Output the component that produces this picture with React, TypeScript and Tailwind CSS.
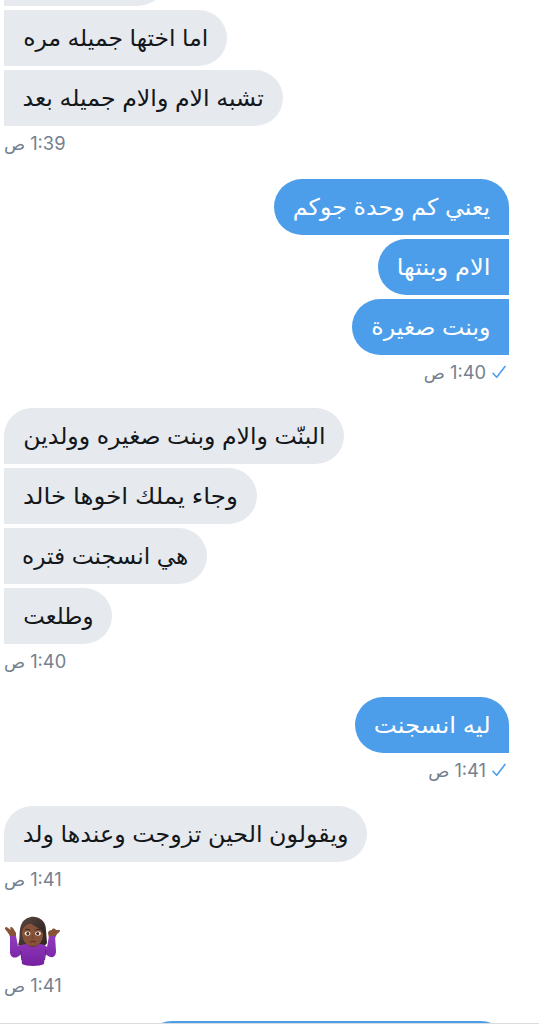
import { useLayoutEffect, useRef, useState } from "react";

type Message = { text: string; width: number };

const opening: Message[] = [
  { text: "اما اختها جميله مره", width: 223 },
  { text: "تشبه الام والام جميله بعد", width: 278.5 },
];
const question: Message[] = [
  { text: "يعني كم وحدة جوكم", width: 235 },
  { text: "الام وبنتها", width: 131 },
  { text: "وبنت صغيرة", width: 157 },
];
const answer: Message[] = [
  { text: "البنّت والام وبنت صغيره وولدين", width: 340 },
  { text: "وجاء يملك اخوها خالد", width: 252.5 },
  { text: "هي انسجنت فتره", width: 203.4 },
  { text: "وطلعت", width: 108 },
];
const why: Message[] = [{ text: "ليه انسجنت", width: 154 }];
const reply: Message[] = [{ text: "ويقولون الحين تزوجت وعندها ولد", width: 363 }];

function FittedText({ text, width }: Message) {
  const ref = useRef<HTMLSpanElement>(null);
  const [scale, setScale] = useState(1);
  useLayoutEffect(() => {
    if (ref.current) setScale(width / ref.current.offsetWidth);
  }, [text, width]);
  return (
    <span ref={ref} className="block w-max shrink-0 origin-center whitespace-nowrap" style={{ transform: `scaleX(${scale})` }}>
      {text}
    </span>
  );
}

function Bubble({ message, sent, first }: { message: Message; sent?: boolean; first?: boolean }) {
  const tone = sent
    ? "self-end rounded-l-[28px] bg-[#4c9eeb] text-white"
    : "self-start rounded-r-[28px] bg-[#e6eaef] text-[#14171a]";
  const corner = first ? (sent ? "rounded-tr-[28px]" : "rounded-tl-[28px]") : "";
  return (
    <div
      dir="rtl"
      className={`flex h-[56.4px] shrink-0 items-center justify-center text-[23px] leading-[32px] ${tone} ${corner}`}
      style={{ width: message.width }}
    >
      <FittedText text={message.text} width={message.width - 37.5} />
    </div>
  );
}

function Stamp({ time, sent }: { time: string; sent?: boolean }) {
  return (
    <div className={`flex h-[34px] items-center text-[18.3px] leading-[24px] text-[#75818e] ${sent ? "self-end pr-[3px]" : "self-start"}`}>
      <span className="flex items-center gap-[5px]" dir="ltr">
        <span className="relative top-px text-[17.5px]">ص</span>
        <span className="font-['Inter']">{time}</span>
      </span>
      {sent && (
        <svg className="ml-[6px] h-[14px] w-[14px]" viewBox="0 0 14 14" fill="none" stroke="#4c9eeb" strokeWidth="1.6" strokeLinecap="round" strokeLinejoin="round">
          <path d="M1 8.3 4.7 12.2 13 1.4" />
        </svg>
      )}
    </div>
  );
}

function Group({ messages, time, sent, continued }: { messages: Message[]; time: string; sent?: boolean; continued?: boolean }) {
  return (
    <section className="mb-[18.6px] flex flex-col">
      <div className="flex flex-col gap-[3.6px]">
        {messages.map((m, i) => (
          <Bubble key={m.text} message={m} sent={sent} first={i === 0 && !continued} />
        ))}
      </div>
      <Stamp time={time} sent={sent} />
    </section>
  );
}

function Shrug() {
  return (
    <svg className="mt-[1px] ml-[1px] block h-[52px] w-[56px]" viewBox="0 0 56 52" role="img" aria-label="shrug">
      <defs>
        <linearGradient id="top" x1="0" y1="0" x2="0" y2="1">
          <stop offset="0" stopColor="#933bbd" />
          <stop offset="1" stopColor="#7521a2" />
        </linearGradient>
        <linearGradient id="hair" x1="0" y1="0" x2="1" y2="1">
          <stop offset="0" stopColor="#57453f" />
          <stop offset="1" stopColor="#302220" />
        </linearGradient>
      </defs>
      <path d="M13 29C16 22 13 14 17 7C20 2 26 0 30 1C37 2 41 7 41 14L42 27C39 32 34 30 28 30C22 33 17 31 13 29Z" fill="url(#hair)" />
      <path d="M5 22C5 18 2 16 0 13C0 11 1 10 3 12L6 14C4 11 6 10 8 12L11 17V22Z" fill="#875237" />
      <path d="M44 22L43 17C43 15 45 14 47 14C47 12 50 12 51 14L54 14C56 14 55 16 52 18L50 22Z" fill="#875237" />
      <path d="M23 26H33V32L28 34L22 31Z" fill="#603725" />
      <path d="M5 20L11 20L13 30C16 29 19 28 22 28C25 32 31 32 34 28C38 28 40 29 42 31L44 20L50 20L51 35C51 42 46 43 40 38L39 48C35 50.5 21 50.5 17 48L16 38C11 44 5 42 5 36Z" fill="url(#top)" />
      <path d="M15.5 35L17 44M41 34L39.5 44" stroke="#5c1b83" strokeWidth="1" />
      <path d="M17 16C18 8 23 7 28 8C35 7 38 11 38 18C38 26 34 30 28 30C21 30 17 25 17 16Z" fill="#855339" />
      <path d="M16 20C16 11 21 10 25 6C29 12 36 10 39 20C42 11 36 2 28 2C20 2 15 10 16 20Z" fill="url(#hair)" />
      <ellipse cx="22.5" cy="17.5" rx="2.8" ry="2" fill="#f7eee8" />
      <ellipse cx="33" cy="17.5" rx="2.8" ry="2" fill="#f7eee8" />
      <circle cx="22.8" cy="17.5" r="1.5" fill="#452a20" />
      <circle cx="32.7" cy="17.5" r="1.5" fill="#452a20" />
      <path d="M20 13.8Q22.5 12.3 25 14.2M30.5 14.2Q33 12.3 35.2 13.8" fill="none" stroke="#38231c" strokeWidth="1" />
      <path d="M27.5 19L27 22L29 22.2" fill="none" stroke="#6b3e2a" strokeWidth=".8" />
      <path d="M25 26Q28 24.6 31 26" fill="none" stroke="#7b3025" strokeWidth="1.5" />
    </svg>
  );
}

export default function App() {
  return (
    <main className="flex h-[1024px] w-[539px] flex-col overflow-hidden border-b border-[#d9dcdf] bg-white pr-[30px] pl-[4px] font-['Liberation_Sans','DejaVu_Sans',sans-serif]">
      <div className="mb-[4px] h-[6px] w-[162px] shrink-0 overflow-hidden">
        <div className="-mt-[50px] h-[56px] rounded-r-[28px] bg-[#e6eaef]" />
      </div>
      <Group messages={opening} time="1:39" continued />
      <Group messages={question} time="1:40" sent />
      <Group messages={answer} time="1:40" />
      <Group messages={why} time="1:41" sent />
      <Group messages={reply} time="1:41" />
      <div className="flex flex-col">
        <Shrug />
        <Stamp time="1:41" />
      </div>
      <div className="mt-[19px] h-[56px] w-[365px] shrink-0 self-end rounded-[28px] bg-[#4c9eeb]" />
    </main>
  );
}
